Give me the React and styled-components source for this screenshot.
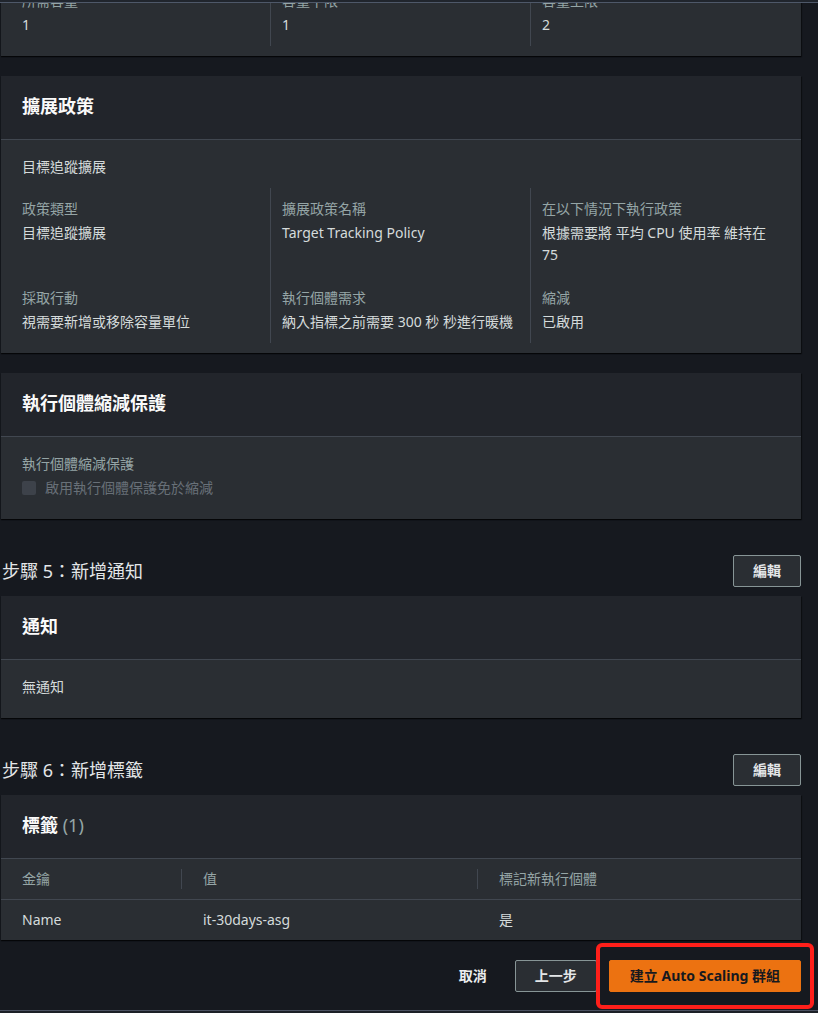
import React from 'react';
import styled, { createGlobalStyle } from 'styled-components';

const C = {
  page: '#16191f',
  card: '#2a2e33',
  head: '#22252b',
  line: '#414750',
  text: '#d5dbdb',
  title: '#fafafa',
  label: '#95a5a6',
  dis: '#687078',
  btnBorder: '#879596',
  orange: '#ec7211',
};

const Global = createGlobalStyle`
  * { box-sizing: border-box; }
  html { overflow: hidden; background: ${C.page}; }
  body {
    margin: 0;
    padding: 0;
    background: ${C.page};
    font-family: "Noto Sans", "Noto Sans CJK TC", sans-serif;
    font-size: 14px;
    line-height: 22px;
    color: ${C.text};
  }
`;

const TopBar = styled.div`
  position: fixed;
  top: 0;
  left: 0;
  right: 0;
  height: 3px;
  background: #20252d;
  border-bottom: 1px solid #4e5869;
  z-index: 5;
`;

const BottomBar = styled.div`
  position: fixed;
  left: 0;
  right: 0;
  bottom: 0;
  height: 3px;
  background: #1c2027;
  border-top: 1px solid #4b5161;
  z-index: 5;
`;

const Page = styled.main`
  width: 801px;
  padding-left: 1px;
  padding-bottom: 30px;
  display: flex;
  flex-direction: column;
  gap: 20px;
`;

const Card = styled.section`
  background: ${C.card};
  box-shadow: 0 1px 1px rgba(0, 0, 0, 0.6), 1px 1px 1px rgba(0, 0, 0, 0.35);
  margin-top: ${(p) => p.$offset || 0}px;
`;

const CardHeader = styled.header`
  background: ${C.head};
  padding: 19px 20px 22px 21px;
  border-bottom: 1px solid ${C.line};
`;

const CardTitle = styled.h2`
  margin: 0;
  font-size: 18px;
  line-height: 22px;
  font-weight: 700;
  color: ${C.title};
`;

const Counter = styled.span`
  font-weight: 400;
  color: ${C.label};
`;

const CardBody = styled.div`
  padding: 16px 20px 20px 21px;
`;

const Plain = styled.div`
  color: ${C.text};
`;

const Columns = styled.div`
  display: grid;
  grid-template-columns: 248px 260px 1fr;
  margin: ${(p) => (p.$flush ? 0 : 10)}px 0 -10px;
`;

const Cell = styled.div`
  padding: ${(p) => (p.$top ? 10 : 0)}px 4px ${(p) => (p.$bottom ? 10 : 21)}px 11px;
  border-left: 1px solid ${C.line};
  &:nth-child(3n + 1) {
    border-left: none;
    padding-left: 0;
    padding-right: 12px;
  }
`;

const Label = styled.div`
  color: ${C.label};
  margin-bottom: 2px;
`;

const Value = styled.div`
  color: ${C.text};
`;

const CheckRow = styled.label`
  display: flex;
  align-items: center;
  margin-top: 2px;
  color: ${C.dis};
`;

const CheckBox = styled.span`
  width: 14px;
  height: 14px;
  border-radius: 2px;
  background: #3d424a;
  margin-right: 9px;
  flex: none;
`;

const StepSection = styled.section`
  display: flex;
  flex-direction: column;
  gap: 9px;
  padding-top: 16px;
`;

const StepHeader = styled.div`
  display: flex;
  align-items: center;
  justify-content: space-between;
`;

const StepTitle = styled.h3`
  margin: 0 0 0 1px;
  font-size: 18px;
  line-height: 22px;
  font-weight: 400;
  color: #e3e6e8;
`;

const Button = styled.button`
  height: 32px;
  padding: 0 ${(p) => (p.$variant === 'primary' ? 20 : 19)}px;
  border-radius: 2px;
  font-family: inherit;
  font-size: 14px;
  line-height: 22px;
  font-weight: 700;
  cursor: pointer;
  white-space: nowrap;
  border: 1px solid
    ${(p) =>
      p.$variant === 'primary' ? C.orange : p.$variant === 'link' ? 'transparent' : C.btnBorder};
  background: ${(p) =>
    p.$variant === 'primary' ? C.orange : p.$variant === 'link' ? 'transparent' : C.card};
  color: ${(p) => (p.$variant === 'primary' ? '#16191f' : p.$variant === 'link' ? '#eceeef' : '#e3e6e8')};
`;

const Table = styled.table`
  width: 100%;
  border-collapse: collapse;
  table-layout: fixed;
`;

const Th = styled.th`
  position: relative;
  text-align: left;
  font-weight: 400;
  color: ${C.label};
  height: 40px;
  padding: 0 20px 0 21px;
  border-bottom: 1px solid ${C.line};
  &:not(:last-child)::after {
    content: '';
    position: absolute;
    right: 0;
    top: 10px;
    bottom: 10px;
    width: 1px;
    background: ${C.line};
  }
`;

const Td = styled.td`
  height: 41px;
  padding: 0 20px 0 21px;
  color: ${C.text};
`;

const Footer = styled.footer`
  display: flex;
  justify-content: flex-end;
  align-items: center;
  gap: 8px;
`;

const PrimaryWrap = styled.div`
  position: relative;
  margin-left: 4px;
  display: flex;
`;

const Highlight = styled.span`
  position: absolute;
  inset: -17px -13px;
  border: 4px solid #ff1f1a;
  border-radius: 6px;
  pointer-events: none;
`;

const KV = ({ label, value, top, bottom }) => (
  <Cell $top={top} $bottom={bottom}>
    <Label>{label}</Label>
    <Value>{value}</Value>
  </Cell>
);

export default function App() {
  return (
    <>
      <Global />
      <TopBar />
      <Page>
        <Card $offset={-36}>
          <CardBody>
            <Columns $flush>
              <KV label="所需容量" value="1" top bottom />
              <KV label="容量下限" value="1" top bottom />
              <KV label="容量上限" value="2" top bottom />
            </Columns>
          </CardBody>
        </Card>

        <Card>
          <CardHeader>
            <CardTitle>擴展政策</CardTitle>
          </CardHeader>
          <CardBody>
            <Plain>目標追蹤擴展</Plain>
            <Columns>
              <KV label="政策類型" value="目標追蹤擴展" top />
              <KV label="擴展政策名稱" value="Target Tracking Policy" top />
              <KV label="在以下情況下執行政策" value="根據需要將 平均 CPU 使用率 維持在 75" top />
              <KV label="採取行動" value="視需要新增或移除容量單位" bottom />
              <KV label="執行個體需求" value="納入指標之前需要 300 秒 秒進行暖機" bottom />
              <KV label="縮減" value="已啟用" bottom />
            </Columns>
          </CardBody>
        </Card>

        <Card>
          <CardHeader>
            <CardTitle>執行個體縮減保護</CardTitle>
          </CardHeader>
          <CardBody>
            <Label>執行個體縮減保護</Label>
            <CheckRow>
              <CheckBox />
              啟用執行個體保護免於縮減
            </CheckRow>
          </CardBody>
        </Card>

        <StepSection>
          <StepHeader>
            <StepTitle>步驟 5：新增通知</StepTitle>
            <Button>編輯</Button>
          </StepHeader>
          <Card>
            <CardHeader>
              <CardTitle>通知</CardTitle>
            </CardHeader>
            <CardBody>
              <Plain>無通知</Plain>
            </CardBody>
          </Card>
        </StepSection>

        <StepSection>
          <StepHeader>
            <StepTitle>步驟 6：新增標籤</StepTitle>
            <Button>編輯</Button>
          </StepHeader>
          <Card>
            <CardHeader>
              <CardTitle>
                標籤 <Counter>(1)</Counter>
              </CardTitle>
            </CardHeader>
            <Table>
              <colgroup>
                <col style={{ width: 181 }} />
                <col style={{ width: 296 }} />
                <col />
              </colgroup>
              <thead>
                <tr>
                  <Th>金鑰</Th>
                  <Th>值</Th>
                  <Th>標記新執行個體</Th>
                </tr>
              </thead>
              <tbody>
                <tr>
                  <Td>Name</Td>
                  <Td>it-30days-asg</Td>
                  <Td>是</Td>
                </tr>
              </tbody>
            </Table>
          </Card>
        </StepSection>

        <Footer>
          <Button $variant="link">取消</Button>
          <Button>上一步</Button>
          <PrimaryWrap>
            <Button $variant="primary">建立 Auto Scaling 群組</Button>
            <Highlight />
          </PrimaryWrap>
        </Footer>
      </Page>
      <BottomBar />
    </>
  );
}
